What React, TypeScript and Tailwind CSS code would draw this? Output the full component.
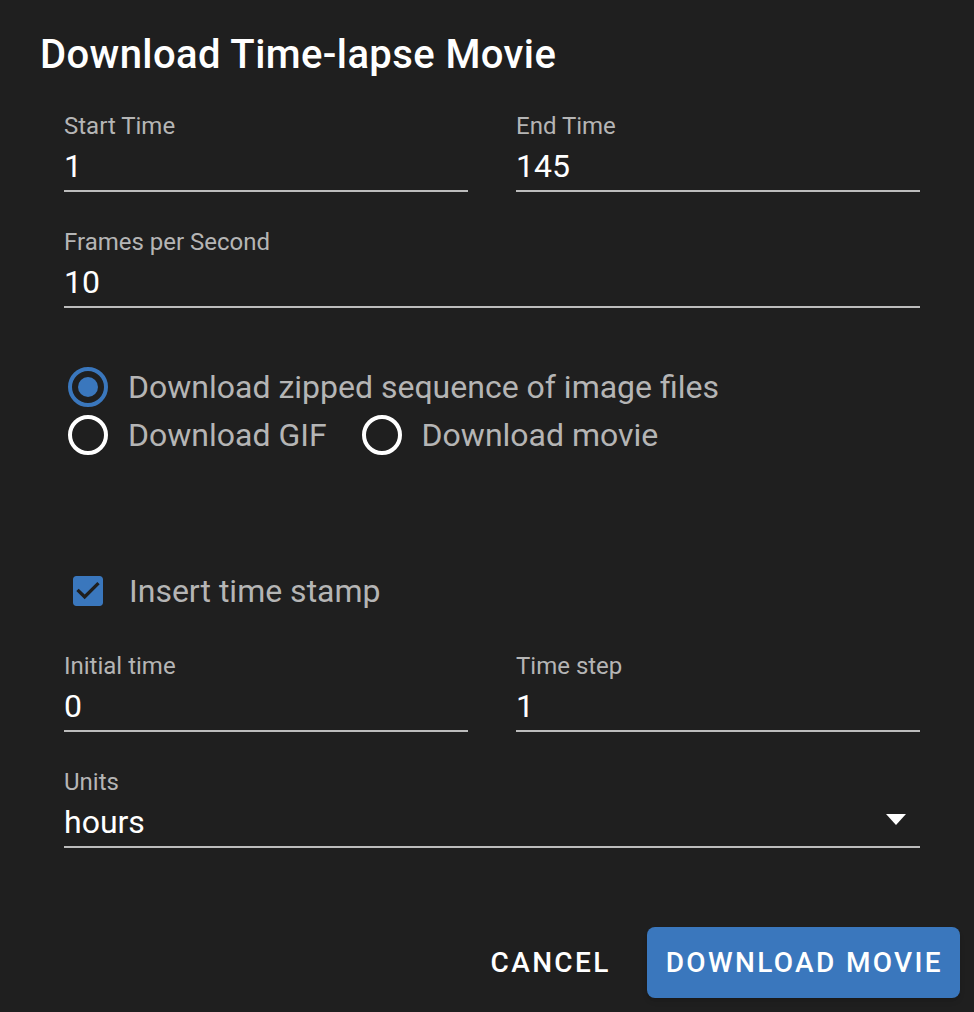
import React, { useState } from 'react'

function Field({ label, value, select }: { label: string; value: string; select?: boolean }) {
  return (
    <div className="flex flex-col">
      <div className="h-8 text-[24px] leading-8 text-[#b5b5b5]">{label}</div>
      <div className="h-[50px] flex items-center justify-between border-b-2 border-[#bcbcbc]">
        <span className="text-[32px] leading-10 text-white">{value}</span>
        {select && (
          <svg width="20" height="11" viewBox="0 0 20 11" className="mr-[14px] -mt-[5px]">
            <polygon points="0,0 20,0 10,11" fill="#ffffff" />
          </svg>
        )}
      </div>
    </div>
  )
}

function Radio({ checked, label }: { checked?: boolean; label: string }) {
  return (
    <label className="flex items-center h-10">
      <span
        className={`w-10 h-10 rounded-full border-4 flex items-center justify-center ${checked ? 'border-[#3a77bd]' : 'border-white'}`}
      >
        {checked && <span className="w-5 h-5 rounded-full bg-[#3a77bd]" />}
      </span>
      <span className="ml-[20px] text-[32px] leading-10 text-[#b5b5b5]">{label}</span>
    </label>
  )
}

export default function App() {
  const [stamp] = useState(true)
  return (
    <div className="w-[974px] h-[1012px] bg-[#1f1f1f] overflow-hidden" style={{ fontFamily: 'Roboto, "Noto Sans", sans-serif' }}>
      <div className="pt-[31px] pl-10">
        <h1 className="h-12 text-[40px] leading-[48px] font-medium tracking-[0.01em] text-white">Download Time-lapse Movie</h1>
      </div>

      <div className="pl-16 pr-[54px] mt-[31px]">
        <div className="grid grid-cols-2 gap-x-12">
          <Field label="Start Time" value="1" />
          <Field label="End Time" value="145" />
        </div>
        <div className="mt-[34px]">
          <Field label="Frames per Second" value="10" />
        </div>

        <div className="mt-[59px] ml-1 flex flex-col gap-2">
          <Radio checked label="Download zipped sequence of image files" />
          <div className="flex items-center gap-[35px]">
            <Radio label="Download GIF" />
            <Radio label="Download movie" />
          </div>
        </div>

        <div className="mt-[116px] flex items-center h-10">
          <svg width="40" height="40" viewBox="0 0 24 24" className="ml-[4px]">
            {stamp ? (
              <path
                fill="#3a77bd"
                d="M19 3H5c-1.11 0-2 .9-2 2v14c0 1.1.89 2 2 2h14c1.11 0 2-.9 2-2V5c0-1.1-.89-2-2-2zm-9 14l-5-5 1.41-1.41L10 14.17l7.59-7.59L19 8l-9 9z"
              />
            ) : null}
          </svg>
          <span className="ml-[21px] text-[32px] leading-10 text-[#b5b5b5]">Insert time stamp</span>
        </div>

        <div className="mt-[39px] grid grid-cols-2 gap-x-12">
          <Field label="Initial time" value="0" />
          <Field label="Time step" value="1" />
        </div>
        <div className="mt-[34px]">
          <Field label="Units" value="hours" select />
        </div>
      </div>

      <div className="mt-[79px] pr-[14px] flex justify-end items-center gap-[18px]">
        <button className="h-[71px] px-[18px] text-[28px] font-medium tracking-[0.084em] text-white">CANCEL</button>
        <button className="h-[71px] pl-[19px] pr-[17px] rounded-lg bg-[#3a77bd] text-[28px] font-medium tracking-[0.084em] text-white shadow-md">
          DOWNLOAD MOVIE
        </button>
      </div>
    </div>
  )
}
